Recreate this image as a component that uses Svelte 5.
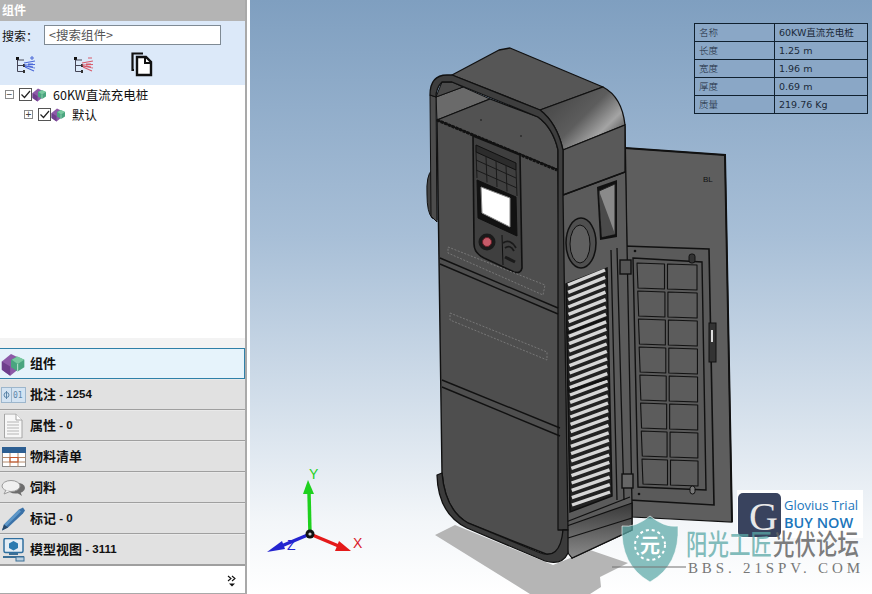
<script>
  const rows = [
    ['名称', '60KW直流充电桩'],
    ['长度', '1.25 m'],
    ['宽度', '1.96 m'],
    ['厚度', '0.69 m'],
    ['质量', '219.76 Kg'],
  ];

  const tabs = [
    { icon: 'cube', label: '组件', active: true },
    { icon: 'note', label: '批注', count: '1254' },
    { icon: 'doc', label: '属性', count: '0' },
    { icon: 'bom', label: '物料清单' },
    { icon: 'chat', label: '饲料' },
    { icon: 'pen', label: '标记', count: '0' },
    { icon: 'view', label: '模型视图', count: '3111' },
  ];

  const lerp = (a, b, t) => a + (b - a) * t;

  // louver slats between the two side rails
  const slats = Array.from({ length: 31 }, (_, i) => {
    const t = i / 30;
    return {
      x1: lerp(568, 572, t),
      y1: lerp(285, 505, t),
      x2: lerp(605, 610, t),
      y2: lerp(270, 492, t),
    };
  });

  // door filter cells, 8 rows by 2 columns
  const cells = [];
  for (let r = 0; r < 8; r++) {
    const t = r / 7;
    const y = 263 + r * 28;
    const l = lerp(637, 642, t);
    const m = lerp(666, 669, t);
    const e = lerp(697, 698, t);
    cells.push(`${l},${y} ${m - 1.5},${y + 1} ${m - 1.5},${y + 26} ${l + 1},${y + 25}`);
    cells.push(`${m + 1.5},${y + 1} ${e},${y + 2} ${e},${y + 27} ${m + 1.5},${y + 26}`);
  }

  // keypad grid above the display
  const padV = [0, 1, 2, 3, 4].map((i) => i / 4);
</script>

{#snippet cube(size)}
  <svg width={size} height={size} viewBox="0 0 30 30" class="ico">
    <path d="M1 12 L12 3 L20 7 L20 22 L11 29 L1 22Z" fill="#8d5aa8" />
    <path d="M1 12 L11 18 L11 29 L1 22Z" fill="#6e3f8c" />
    <path d="M19 6 L28 10 L28 19 L20 24 L12 19 L12 10Z" fill="#4aa57f" />
    <path d="M13 10 L20 6 L28 10 L20 15Z" fill="#79c9a0" />
    <path d="M20 15 L20 24" stroke="#d8f0e4" stroke-width="1" />
  </svg>
{/snippet}

{#snippet check()}
  <span class="check">
    <svg width="11" height="11" viewBox="0 0 11 11"><path d="M1.5 5.5 L4.5 8.5 L10 2" fill="none" stroke="#222" stroke-width="1.2" /></svg>
  </span>
{/snippet}

{#snippet treeIcon(color, sign)}
  <svg width="22" height="20" viewBox="0 0 22 20">
    <rect x="1" y="2" width="3" height="3" fill="#111" />
    <path d="M2.5 5 V16.5 H9 M2.5 10.5 H9 M2.5 5 H9" fill="none" stroke="#445" stroke-width="1" />
    <rect x="8" y="9" width="2" height="3" fill="#333" />
    <rect x="8" y="15" width="2" height="3" fill="#333" />
    <path d="M9 8 L20 6 M9 10 L20 9.5 M10 11 L20 13 M10 12 L19 16 M13 9 L18 9 M13 11 L18 12" stroke={color} stroke-width="1.1" fill="none" />
    <path d={sign} stroke={color} stroke-width="1" fill="none" />
  </svg>
{/snippet}

{#snippet tabIcon(name)}
  {#if name === 'cube'}
    {@render cube(25)}
  {:else if name === 'note'}
    <svg width="25" height="18" viewBox="0 0 25 18" class="ico">
      <rect x="0.5" y="1.5" width="24" height="15" fill="#d3e3f2" stroke="#9db6cc" />
      <path d="M10.5 2 V16" stroke="#9db6cc" />
      <circle cx="5.5" cy="9" r="2.5" fill="none" stroke="#5d86a8" />
      <path d="M5.5 5 V13" stroke="#5d86a8" />
      <text x="12" y="12" class="ico-text">01</text>
    </svg>
  {:else if name === 'doc'}
    <svg width="22" height="25" viewBox="0 0 22 25" class="ico">
      <path d="M3.5 0.5 H15 L21 6.5 V24.5 H3.5Z" fill="#f7f7f7" stroke="#a5a5a5" />
      <path d="M15 0.5 V6.5 H21" fill="#fff" stroke="#a5a5a5" />
      <path d="M6 8.5 H18 M6 11.5 H18 M6 14.5 H18 M6 17.5 H18 M6 20.5 H18" stroke="#b5b5b5" />
    </svg>
  {:else if name === 'bom'}
    <svg width="25" height="20" viewBox="0 0 25 20" class="ico">
      <rect x="1.5" y="0.5" width="23" height="19" fill="#fff" stroke="#8c8c8c" />
      <rect x="1" y="0" width="24" height="6" fill="#2d5f92" />
      <path d="M1.5 10.5 H24.5 M1.5 15 H24.5 M9 6 V20 M17 6 V20" stroke="#b48a6c" />
      <rect x="9" y="10.5" width="8" height="4.5" fill="none" stroke="#c8552a" />
    </svg>
  {:else if name === 'chat'}
    <svg width="25" height="18" viewBox="0 0 25 18" class="ico">
      <ellipse cx="15" cy="9" rx="9" ry="5.5" fill="#6d6d6d" />
      <path d="M19 12 L21 17 L15 13Z" fill="#6d6d6d" />
      <ellipse cx="10" cy="7" rx="9" ry="5.5" fill="#f0f0f0" stroke="#9a9a9a" />
      <path d="M5 11 L3 15 L9 12.5" fill="#f0f0f0" stroke="#9a9a9a" />
    </svg>
  {:else if name === 'pen'}
    <svg width="25" height="25" viewBox="0 0 25 25" class="ico">
      <path d="M1 24 L3 18 L18 3 L22 1 L24 4 L22 7 L7 21Z" fill="#3b72a8" />
      <path d="M3 18 L18 3 L20 5 L5 20Z" fill="#5e97c8" />
      <path d="M1 24 L3 18 L7 21Z" fill="#28496b" />
    </svg>
  {:else}
    <svg width="25" height="24" viewBox="0 0 25 24" class="ico">
      <rect x="3" y="0.5" width="19" height="14" rx="1.5" fill="#e4edf5" stroke="#2f6f9f" stroke-width="1.5" />
      <path d="M12.5 3 L17 5.5 L17 10 L12.5 12.5 L8 10 L8 5.5Z" fill="#2a7ab0" />
      <path d="M8 15 H17 V17 H8Z M2 18 H23 V20 H2Z" fill="#3b6f96" />
      <rect x="15" y="19" width="8" height="4" fill="#b9cfe0" stroke="#3b6f96" />
    </svg>
  {/if}
{/snippet}

<div class="app">
  <aside class="panel">
    <div class="title">组件</div>
    <div class="filter">
      <div class="search">
        <span>搜索：</span>
        <div class="input">&lt;搜索组件&gt;</div>
      </div>
      <div class="tools">
        {@render treeIcon('#4a68d8', 'M17 1 V5 M15 3 H19')}
        {@render treeIcon('#d85a6a', 'M15 3 H19')}
        <svg width="22" height="25" viewBox="0 0 22 25">
          <path d="M3 18 H1.5 V1.5 H12" fill="none" stroke="#111" stroke-width="2.2" />
          <path d="M6 5 H15 L20 10 V23 H6Z" fill="#fff" stroke="#111" stroke-width="2.4" />
          <path d="M14 5 V11 H20" fill="none" stroke="#111" stroke-width="2" />
        </svg>
      </div>
    </div>
    <div class="tree">
      <div class="node">
        <span class="expander">−</span>
        {@render check()}
        {@render cube(15)}
        <span class="name">60KW直流充电桩</span>
      </div>
      <div class="node child">
        <span class="expander">+</span>
        {@render check()}
        {@render cube(15)}
        <span class="name">默认</span>
      </div>
    </div>
    <div class="sash"></div>
    <div class="tabs">
      {#each tabs as tab}
        <div class="tab" class:active={tab.active}>
          <span class="tab-icon">{@render tabIcon(tab.icon)}</span>
          <span class="tab-label">{tab.label}</span>
          {#if tab.count}<span class="count">&nbsp;- {tab.count}</span>{/if}
        </div>
      {/each}
    </div>
    <div class="more">
      <svg width="10" height="12" viewBox="0 0 10 12">
        <path d="M1 1 L4 3.5 L1 6 M5 1 L8 3.5 L5 6" fill="none" stroke="#111" stroke-width="1.1" />
        <path d="M2 8.5 H8 L5 11.5Z" fill="#111" />
      </svg>
    </div>
  </aside>

  <main class="view">
    <svg class="scene" viewBox="250 0 622 594" width="622" height="594">
      <defs>
        <linearGradient id="curve" x1="0" y1="0" x2="1" y2="0.75">
          <stop offset="0" stop-color="#3f3f3f" />
          <stop offset="0.55" stop-color="#5d5d5d" />
          <stop offset="0.8" stop-color="#a4a4a4" />
          <stop offset="1" stop-color="#4c4c4c" />
        </linearGradient>
        <linearGradient id="base" x1="0" y1="0" x2="0" y2="1">
          <stop offset="0" stop-color="#383838" />
          <stop offset="1" stop-color="#8a8a8a" />
        </linearGradient>
      </defs>

      <!-- ground shadow -->
      <polygon points="435,535 455,525 553,565 590,550 628,563 600,577 601,587 590,594 530,594" fill="#b5b5b5" />

      <!-- door -->
      <polygon points="625,148 725,155 732,522 632,517" fill="#5e5e5e" stroke="#111" stroke-width="1.2" />
      <path d="M625,148 L725,155 L732,522" fill="none" stroke="#111" stroke-width="2" />
      <polygon points="624,246 709,249 714,505 630,500" fill="#5a5a5a" stroke="#111" stroke-width="1.6" />
      <polygon points="633,258 702,262 706,490 638,487" fill="#5a5a5a" stroke="#111" stroke-width="1.4" />
      {#each cells as c}
        <polygon points={c} fill="#5c5c5c" stroke="#111" stroke-width="1.1" stroke-linejoin="round" />
      {/each}
      <rect x="689" y="254" width="6" height="9" rx="2.5" fill="#333" stroke="#111" />
      <rect x="690" y="486" width="5" height="8" rx="2.5" fill="#777" stroke="#111" />
      <rect x="709" y="323" width="7" height="39" fill="#333" stroke="#111" />
      <rect x="711" y="330" width="2" height="12" fill="#ddd" />
      <circle cx="635" cy="251" r="1.3" fill="#111" />
      <circle cx="639" cy="494" r="1.3" fill="#111" />
      <text x="703" y="182" class="tiny">BL</text>

      <!-- side wall with louver -->
      <polygon points="558,170 625,127 627,245 632,503 632,530 572,558 563,530" fill="#5b5b5b" stroke="#111" stroke-width="1.3" />
      <path d="M611,250 L617,500 M617,248 L624,500" stroke="#111" stroke-width="1.3" fill="none" />
      <polygon points="566,284 607,268 612,496 570,512" fill="#222" stroke="#111" stroke-width="1.5" />
      {#each slats as s}
        <line x1={s.x1} y1={s.y1} x2={s.x2} y2={s.y2} stroke="#d6d6d6" stroke-width="3.4" />
      {/each}
      <path d="M567,333 L607,318 M568,391 L609,378" stroke="#111" stroke-width="2.2" />
      <rect x="620" y="260" width="11" height="14" fill="#555" stroke="#111" stroke-width="1.4" />
      <rect x="622" y="474" width="11" height="14" fill="#666" stroke="#111" stroke-width="1.4" />
      <!-- base step -->
      <polygon points="564,527 632,503 632,530 572,558 568,553" fill="url(#base)" stroke="#111" stroke-width="1.2" />
      <path d="M568,538 L632,518 M566,522 L630,497" stroke="#111" stroke-width="1.2" />

      <!-- top cover -->
      <polygon points="452,75 499,50 510,48 603,87 540,110" fill="#565656" stroke="#111" stroke-width="1.3" stroke-linejoin="round" />
      <path d="M540,110 L603,87 Q622,97 625,125 L563,150 Q557,123 540,110Z" fill="url(#curve)" stroke="#111" stroke-width="1.3" />
      <polygon points="563,150 625,125 625,172 563,195" fill="#595959" stroke="#111" stroke-width="1.3" />
      <path d="M563,195 L625,172" stroke="#111" stroke-width="1.4" />

      <!-- hood underside -->
      <polygon points="436,97 463,87 490,99 437,120" fill="#6a6a6a" stroke="#111" />
      <polygon points="436,97 442,82 452,82 463,87" fill="#4a4a4a" stroke="#111" />
      <path d="M437,120 L490,99 L538,117 Q553,128 558,150 L558,170Z" fill="#525252" stroke="#111" stroke-width="1.2" />

      <!-- side window and charging socket -->
      <polygon points="597,187 617,180 617,237 600,240" fill="#111" />
      <polygon points="599,191 615,184 615,234 602,237" fill="#8a8a8a" stroke="#222" />
      <polygon points="599,191 602,237 615,234" fill="#4a4a4a" />
      <ellipse cx="581" cy="243" rx="15" ry="25" fill="#4f4f4f" stroke="#111" stroke-width="1.5" />
      <ellipse cx="580" cy="244" rx="10" ry="19" fill="#606060" stroke="#111" />

      <!-- left strip and bump -->
      <path d="M432,170 Q426,175 427,195 Q427,212 432,218 L437,220 L437,170Z" fill="#444" stroke="#111" />
      <polygon points="430,95 436,97 437,222 431,216" fill="#4c4c4c" stroke="#111" />

      <!-- front face -->
      <path d="M437,120 L558,170 L563,533 Q563,556 546,554 L468,523 Q445,510 442,473Z" fill="#4e4e4e" stroke="#111" stroke-width="1.4" stroke-linejoin="round" />
      <path d="M437,120 L557,170" stroke="#111" stroke-width="3" stroke-dasharray="3 1" />

      <!-- front rim -->
      <path d="M430,95 Q430,75 447,75 L452,75 L540,110 Q557,123 563,150 L563,195 L568,530 L558,530 L558,170 L558,150 Q553,128 538,117 L452,82 L442,82 Q436,88 436,97Z" fill="#3e3e3e" stroke="#111" stroke-width="1.3" stroke-linejoin="round" />

      <!-- plinth -->
      <path d="M437,475 L442,473 Q445,510 468,523 L538,552 Q560,562 563,530 L568,530 L568,553 Q562,566 545,561 L467,528 Q438,514 437,475Z" fill="#3b3b3b" stroke="#111" stroke-width="1.3" stroke-linejoin="round" />

      <!-- control panel -->
      <path d="M473,136 L520,155 L522,268 Q521,274 514,272 L484,258 Q474,253 474,244Z" fill="#3f3f3f" stroke="#111" stroke-width="1.6" />
      <polygon points="476,145 516,163 516,170 476,152" fill="#2c2c2c" stroke="#111" />
      {#each padV as t}
        <line x1={lerp(476, 516, t)} y1={lerp(152, 170, t)} x2={lerp(477, 517, t)} y2={lerp(178, 196, t)} stroke="#1a1a1a" />
      {/each}
      <path d="M476,160 L516,178 M476,170 L517,188" stroke="#1a1a1a" fill="none" />
      <polygon points="477,180 516,197 517,236 478,218" fill="#121212" stroke="#111" />
      <polygon points="481,187 510,198 510,227 482,213" fill="#fff" stroke="#888" />
      <line x1="502" y1="235" x2="503" y2="265" stroke="#111" />
      <circle cx="487" cy="242" r="8.5" fill="#1a1a1a" />
      <circle cx="487" cy="242" r="4.5" fill="#c65a68" stroke="#6a1f28" />
      <path d="M503,243 Q510,238 516,248 M505,248 Q510,244 514,251" fill="none" stroke="#1a1a1a" stroke-width="1.8" />
      <path d="M505,257 L515,262" stroke="#1a1a1a" stroke-width="3" />

      <!-- grooves and dashed label recesses -->
      <polygon points="448,247 545,285 543,295 448,253" fill="none" stroke="#777" stroke-dasharray="2 1.5" />
      <polygon points="450,313 547,352 547,360 450,320" fill="none" stroke="#777" stroke-dasharray="2 1.5" />
      <path d="M440,258 L558,308 M440,264 L558,314" stroke="#111" stroke-width="1.4" />
      <path d="M442,380 L560,428 M442,387 L560,436" stroke="#111" stroke-width="1.4" />
      <circle cx="481" cy="120" r="0.8" fill="#111" />
      <circle cx="521" cy="136" r="0.8" fill="#111" />

      <!-- triad -->
      <path d="M310,534 L309,492" stroke="#1ed11e" stroke-width="3.5" />
      <polygon points="308,480 303,494 314,494" fill="#1ed11e" />
      <path d="M310,534 L341,547" stroke="#e41a1a" stroke-width="3.5" />
      <polygon points="351,551 339,541 335,551" fill="#e41a1a" />
      <path d="M310,534 L279,547" stroke="#2424d0" stroke-width="3.5" />
      <polygon points="267,552 282,541 285,549" fill="#2424d0" />
      <circle cx="310" cy="534" r="4.5" fill="#111" />
      <circle cx="310" cy="534" r="1.6" fill="#ccc" />
      <text x="309" y="479" class="axis y">Y</text>
      <text x="353" y="548" class="axis x">X</text>
      <text x="287" y="550" class="axis z">Z</text>

      <!-- Glovius badge -->
      <rect x="737" y="490" width="126" height="48" fill="#fff" />
      <rect x="738" y="493" width="43" height="44" rx="5" fill="#39435e" />
      <text x="749" y="530" class="g">G</text>
      <text x="784" y="510" class="glovius">Glovius Trial</text>
      <text x="784" y="528" class="buy">BUY NOW</text>

      <!-- forum watermark -->
      <path d="M650,516 Q635,528 622,526 Q620,565 650,582 Q680,565 678,526 Q665,528 650,516Z" fill="#5aa8a6" fill-opacity="0.72" stroke="#fff" stroke-opacity="0.6" />
      <circle cx="650" cy="545" r="15" fill="none" stroke="#fff" stroke-width="2" stroke-dasharray="3 3" />
      <text x="650" y="553" class="seal">元</text>
      <g transform="translate(686 555) scale(1 1.3)">
        <text x="0" y="0" class="wm teal">阳光工匠</text>
        <text x="87" y="0" class="wm grey">光伏论坛</text>
      </g>
      <path d="M612,567 H686" stroke="#777" stroke-width="1.4" opacity="0.7" />
      <text x="688" y="573" class="bbs" textLength="172" lengthAdjust="spacing">BBS. 21SPV. COM</text>
    </svg>

    <table class="spec">
      <tbody>
        {#each rows as [k, v]}
          <tr><th>{k}</th><td>{v}</td></tr>
        {/each}
      </tbody>
    </table>
  </main>
</div>

<style>
  :global(body) {
    margin: 0;
    background: #fff;
    overflow: hidden;
  }
  .app {
    display: flex;
    width: 872px;
    height: 594px;
    font-family: "Noto Sans CJK SC", "Liberation Sans", sans-serif;
    overflow: hidden;
  }
  .panel {
    width: 245px;
    flex: none;
    display: flex;
    flex-direction: column;
    background: #fff;
    border-right: 2px solid #a9a9a9;
    border-bottom: 1px solid #a9a9a9;
    margin-right: 3px;
    height: 593px;
  }
  .title {
    height: 21px;
    line-height: 20px;
    background: #b4b4b4;
    color: #fff;
    font-size: 12px;
    font-weight: 700;
    padding-left: 2px;
  }
  .filter {
    height: 64px;
    background: #dce9f9;
    box-sizing: border-box;
    padding-top: 4px;
  }
  .search {
    display: flex;
    align-items: center;
    font-size: 12px;
    color: #111;
    padding-left: 2px;
    gap: 6px;
  }
  .search span { width: 36px; }
  .input {
    width: 171px;
    height: 18px;
    line-height: 17px;
    border: 1px solid #7f8a94;
    background: #fff;
    color: #555;
    font-size: 12.5px;
    padding-left: 4px;
  }
  .tools {
    display: flex;
    align-items: center;
    margin-top: 7px;
    padding-left: 15px;
    gap: 36px;
  }
  .tree {
    height: 254px;
    margin-top: -1px;
    box-sizing: border-box;
    flex: none;
  }
  .node {
    display: flex;
    align-items: center;
    height: 20px;
    font-size: 12.5px;
    color: #111;
    padding-left: 5px;
  }
  .node.child { padding-left: 24px; }
  .expander {
    width: 9px;
    height: 9px;
    line-height: 7px;
    text-align: center;
    border: 1px solid #8a8a8a;
    font-size: 10px;
    color: #444;
    box-sizing: border-box;
    font-family: "Liberation Sans", sans-serif;
  }
  .check {
    width: 13px;
    height: 13px;
    border: 1px solid #555;
    background: #fff;
    box-sizing: border-box;
    margin-left: 5px;
    display: flex;
    align-items: center;
    justify-content: center;
  }
  .ico { display: block; flex: none; }
  .name { margin-left: 6px; }
  .sash {
    height: 10px;
    background: #f3f3f3;
  }
  .tabs {
    display: flex;
    flex-direction: column;
  }
  .tab {
    height: 27px;
    display: flex;
    align-items: center;
    background: #e1e1e1;
    border-top: 1px solid #e9e9e9;
    border-bottom: 2px solid #9f9f9f;
    padding: 0 0 2px 30px;
    position: relative;
    font-size: 13px;
    font-weight: 700;
    color: #111;
    margin-bottom: -1px;
  }
  .tab:last-child { margin-bottom: 0; }
  .tab.active {
    background: #e6f3fb;
    border: 1px solid #2f80a8;
    border-left: none;
    height: 27px;
    margin-bottom: 0;
  }
  .tab-icon {
    position: absolute;
    left: 1px;
    top: 50%;
    transform: translateY(-50%);
  }
  .count {
    font-size: 11.5px;
    font-family: "Liberation Sans", sans-serif;
  }
  .more {
    display: flex;
    justify-content: flex-end;
    padding: 9px 8px 0 0;
  }
  .view {
    flex: 1;
    position: relative;
    background: linear-gradient(#7f9fc0 0%, #a8bfd7 40%, #d6e1ec 70%, #f3f6f9 88%, #fff 100%);
  }
  .scene {
    position: absolute;
    inset: 0;
    display: block;
  }
  .spec {
    position: absolute;
    left: 444px;
    top: 23px;
    width: 174px;
    border-collapse: collapse;
    table-layout: fixed;
    font-size: 9.5px;
    color: #1b2a3a;
    background: #8aa7c6;
  }
  .spec th, .spec td {
    height: 17px;
    padding: 0 0 0 4px;
    border: 1px solid #10202e;
    text-align: left;
    font-weight: 400;
    line-height: 1;
    overflow: hidden;
    white-space: nowrap;
  }
  .spec th { width: 75px; font-weight: 300; }
  .spec td { font-family: "DejaVu Sans", "Noto Sans CJK SC", sans-serif; }
  .axis {
    font-family: "Liberation Sans", sans-serif;
    font-size: 14px;
  }
  .axis.y { fill: #1ed11e; }
  .axis.x { fill: #d9202a; }
  .axis.z { fill: #2424d0; }
  .tiny { font: 8px "Liberation Sans", sans-serif; fill: #111; }
  .ico-text { font: 8px "DejaVu Sans Mono", monospace; fill: #5d86a8; }
  .g { font: 40px "Liberation Serif", serif; fill: #e8e8e8; }
  .glovius { font: 13px "Open Sans", sans-serif; fill: #1b75bb; }
  .buy { font: 600 14.5px "Open Sans", sans-serif; fill: #1b75bb; }
  .seal { font: 700 20px "Noto Sans CJK SC", sans-serif; fill: #fff; text-anchor: middle; }
  .wm { font: 500 21.5px "Noto Sans CJK SC", sans-serif; }
  .wm.teal { fill: #5aa8a6; fill-opacity: 0.75; }
  .wm.grey { fill: #666; fill-opacity: 0.85; }
  .bbs { font: 15px "Liberation Serif", serif; fill: #777; }
</style>
